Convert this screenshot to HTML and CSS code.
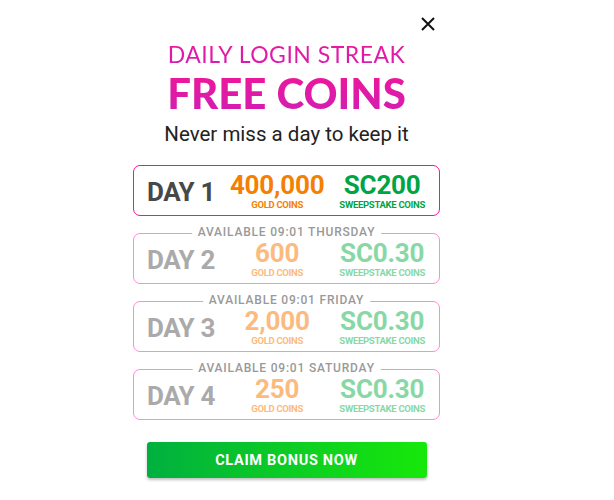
FILE: index.html
```html
<!DOCTYPE html>
<html>
<head>
<meta charset="utf-8">
<link rel="stylesheet" href="styles.css">
</head>
<body>
<div class="modal">
  <button class="close" aria-label="Close">
    <svg width="14" height="14" viewBox="0 0 14 14"><path d="M1 1L13 13M13 1L1 13" stroke="#111" stroke-width="2" fill="none"/></svg>
  </button>
  <div class="panel">
    <h2 class="kicker">DAILY LOGIN STREAK</h2>
    <h1 class="headline">FREE COINS</h1>
    <p class="sub">Never miss a day to keep it</p>
    <div class="days">
      <div class="day active">
        <span class="day-label">DAY 1</span>
        <div class="reward gold"><span class="amt">400,000</span><span class="unit">GOLD COINS</span></div>
        <div class="reward sc"><span class="amt">SC200</span><span class="unit">SWEEPSTAKE COINS</span></div>
      </div>
      <div class="day locked">
        <span class="avail">AVAILABLE 09:01 THURSDAY</span>
        <span class="day-label">DAY 2</span>
        <div class="reward gold"><span class="amt">600</span><span class="unit">GOLD COINS</span></div>
        <div class="reward sc"><span class="amt">SC0.30</span><span class="unit">SWEEPSTAKE COINS</span></div>
      </div>
      <div class="day locked">
        <span class="avail">AVAILABLE 09:01 FRIDAY</span>
        <span class="day-label">DAY 3</span>
        <div class="reward gold"><span class="amt">2,000</span><span class="unit">GOLD COINS</span></div>
        <div class="reward sc"><span class="amt">SC0.30</span><span class="unit">SWEEPSTAKE COINS</span></div>
      </div>
      <div class="day locked">
        <span class="avail">AVAILABLE 09:01 SATURDAY</span>
        <span class="day-label">DAY 4</span>
        <div class="reward gold"><span class="amt">250</span><span class="unit">GOLD COINS</span></div>
        <div class="reward sc"><span class="amt">SC0.30</span><span class="unit">SWEEPSTAKE COINS</span></div>
      </div>
    </div>
    <button class="claim">CLAIM BONUS NOW</button>
  </div>
</div>
</body>
</html>
```
FILE: styles.css
```css
* { box-sizing: border-box; }
html, body { margin: 0; padding: 0; background: #fff; }
body { font-family: Roboto, "Noto Sans", sans-serif; }
.modal { position: relative; width: 614px; height: 500px; }
.close {
  position: absolute; left: 421px; top: 17px;
  width: 14px; height: 14px; padding: 0; border: 0; background: none;
  display: block;
}
.close svg { display: block; }
.panel {
  margin-left: 133px; width: 307px; padding-top: 41px;
  display: flex; flex-direction: column; align-items: center;
}
.kicker, .headline {
  margin: 0;
  background: linear-gradient(180deg, #ee179a 0%, #d21db2 100%);
  -webkit-background-clip: text; background-clip: text;
  color: transparent;
  font-family: Lato, "Noto Sans", sans-serif;
}
.kicker { font-size: 23px; font-weight: 400; line-height: 26px; letter-spacing: 0.5px; }
.headline { font-size: 42px; font-weight: 900; line-height: 40px; margin-top: 6px; letter-spacing: 0; }
.sub {
  margin: 9px 0 0; font-size: 20.5px; line-height: 24px; color: #222; font-weight: 400;
}
.days { width: 307px; margin-top: 19px; display: flex; flex-direction: column; gap: 17px; }
.day {
  position: relative; height: 51px;
  border: 1px solid #ff8bd4; border-radius: 7px;
  display: flex; align-items: center; justify-content: space-between;
  padding: 2px 14px 0 13px;
}
.day.active { border-color: #f0159a; }
.day-label { font-size: 26px; font-weight: 700; color: #484848; margin-top: 0; letter-spacing: -0.4px; }
.reward { display: flex; flex-direction: column; align-items: center; }
.amt { font-size: 26px; font-weight: 700; line-height: 24px; letter-spacing: -0.2px; }
.unit { font-size: 9.5px; font-weight: 700; line-height: 12px; margin-top: 2px; letter-spacing: -0.3px; }
.gold { color: #f57f00; }
.sc { color: #00a443; }
.locked .day-label { color: #aaa; }
.locked .gold { color: #fbbb80; }
.locked .sc { color: #88d8a6; }
.avail {
  position: absolute; top: -9px; left: 50%; transform: translateX(-50%);
  background: #fff; padding: 0 6px; white-space: nowrap;
  font-size: 12px; font-weight: 500; color: #999; line-height: 15px; letter-spacing: 0.8px;
}
.claim {
  margin-top: 22px; width: 280px; height: 36px; border: 0; border-radius: 3px;
  background: linear-gradient(90deg, #00b03f 0%, #17e80a 100%);
  box-shadow: 0 2px 3px rgba(0,0,0,0.25);
  color: #fff; font-family: Roboto, sans-serif; font-size: 14.5px; font-weight: 700; letter-spacing: 0.7px;
  margin-left: 0; margin-right: 0;
}
```
